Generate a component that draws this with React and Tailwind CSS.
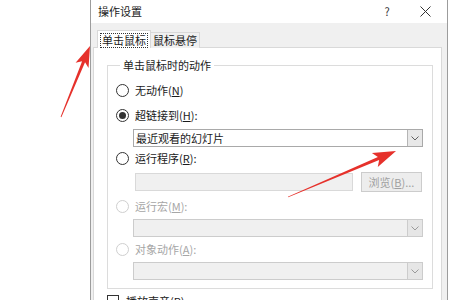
import React from "react";

const font = { fontFamily: '"Noto Sans CJK SC", "Noto Sans", sans-serif' };

// red annotation arrow, points computed from tail -> tip
function Arrow({ tail, tip, head = 20, wing = 7, shaft = 1.6 }) {
    const dx = tip[0] - tail[0];
    const dy = tip[1] - tail[1];
    const len = Math.hypot(dx, dy);
    const ux = dx / len;
    const uy = dy / len;
    const nx = -uy;
    const ny = ux;
    const bx = tip[0] - ux * head;
    const by = tip[1] - uy * head;
    const pts = [
        [tail[0] + nx * 0.4, tail[1] + ny * 0.4],
        [bx + ux * 4 + nx * shaft, by + uy * 4 + ny * shaft],
        [bx + nx * wing, by + ny * wing],
        tip,
        [bx - nx * wing, by - ny * wing],
        [bx + ux * 4 - nx * shaft, by + uy * 4 - ny * shaft],
        [tail[0] - nx * 0.4, tail[1] - ny * 0.4],
    ];
    return <polygon points={pts.map((p) => p.join(",")).join(" ")} fill="#e6312b" />;
}

function Radio({ checked, disabled, children }) {
    return (
        <div className="flex items-center h-[18px]">
            <span
                className={`w-[13px] h-[13px] rounded-full border bg-white flex items-center justify-center ${disabled ? "border-[#cfcfcf]" : "border-[#333333]"
                    }`}
            >
                {checked && <span className="w-[7px] h-[7px] rounded-full bg-[#333333]" />}
            </span>
            <span className={`ml-[6px] ${disabled ? "text-[#a6a6a6]" : "text-[#1a1a1a]"}`}>
                {children}
            </span>
        </div>
    );
}

function Chevron({ color }) {
    return (
        <svg width="8" height="5" viewBox="0 0 8 5">
            <path d="M0.5 0.5 L4 4 L7.5 0.5" fill="none" stroke={color} strokeWidth="1" />
        </svg>
    );
}

function Select({ value, disabled }) {
    return (
        <div
            className={`ml-[17px] h-[18px] flex border ${disabled ? "border-[#cccccc] bg-[#f0f0f0]" : "border-[#a9a9a9] bg-white"
                }`}
        >
            <span className="flex-1 px-[2px] leading-[16px] text-[#1a1a1a]">{value}</span>
            <span
                className={`w-[15px] border-l flex items-center justify-center ${disabled ? "border-[#cccccc] bg-[#e6e6e6]" : "border-[#b5b5b5] bg-[#e8e8e8]"
                    }`}
            >
                <Chevron color={disabled ? "#9a9a9a" : "#606060"} />
            </span>
        </div>
    );
}

export default function App() {
    return (
        <div className="w-[450px] h-[300px] bg-white relative overflow-hidden flex text-[11px]" style={font}>
            <div className="ml-[90px] w-[358px] h-full border-l border-r border-[#9c9c9c] flex flex-col bg-[#f0f0f0]">
                {/* Title bar */}
                <div className="h-[23px] bg-white flex items-center shrink-0">
                    <span className="pl-[7px] flex-1 text-[#1a1a1a]">操作设置</span>
                    <span className="w-[14px] text-center text-[#333333] mr-[26px]">?</span>
                    <svg width="11" height="11" viewBox="0 0 11 11" className="mr-[16px]">
                        <path d="M0.5 0.5 L10.5 10.5 M10.5 0.5 L0.5 10.5" stroke="#333333" strokeWidth="1" />
                    </svg>
                </div>

                {/* Tabs */}
                <div className="flex items-end mt-[7px] ml-[6px] h-[18px] shrink-0 relative z-10">
                    <div className="h-[18px] px-[2px] pt-[1px] bg-white border border-b-0 border-[#d9d9d9]">
                        <span className="px-[1px] border border-dotted border-[#333333] leading-[13px] inline-block text-[#1a1a1a]">
                            单击鼠标
                        </span>
                    </div>
                    <div className="h-[16px] px-[2px] flex items-center border border-l-0 border-b-0 border-[#d9d9d9] bg-[#f0f0f0] text-[#1a1a1a]">
                        鼠标悬停
                    </div>
                </div>

                {/* Panel */}
                <div className="ml-[2px] mr-[5px] -mt-px flex-1 bg-white border border-[#d9d9d9] pt-[9px] pl-[13px] pr-[8px]">
                    <fieldset className="border border-[#dcdcdc] pl-[8px] pr-[9px] pb-[8px]">
                        <legend className="ml-[4px] px-[3px] leading-[16px] text-[#1a1a1a]">单击鼠标时的动作</legend>
                        <div className="pt-[8px] flex flex-col">
                            <Radio>
                                无动作(<u>N</u>)
                            </Radio>
                            <div className="mt-[7px]">
                                <Radio checked>
                                    超链接到(<u>H</u>):
                                </Radio>
                            </div>
                            <div className="mt-[5px]">
                                <Select value="最近观看的幻灯片" />
                            </div>
                            <div className="mt-[2px]">
                                <Radio>
                                    运行程序(<u>R</u>):
                                </Radio>
                            </div>
                            <div className="mt-[5px] flex items-center h-[20px]">
                                <div className="ml-[19px] flex-1 h-[18px] bg-[#f0f0f0] border border-[#d9d9d9]" />
                                <div className="ml-[8px] mr-[1px] w-[61px] h-[20px] bg-[#ededed] border border-[#cccccc] flex items-center justify-center text-[#a0a0a0]">
                                    浏览(<u>B</u>)...
                                </div>
                            </div>
                            <div className="mt-[5px]">
                                <Radio disabled>
                                    运行宏(<u>M</u>):
                                </Radio>
                            </div>
                            <div className="mt-[4px]">
                                <Select disabled value="" />
                            </div>
                            <div className="mt-[3px]">
                                <Radio disabled>
                                    对象动作(<u>A</u>):
                                </Radio>
                            </div>
                            <div className="mt-[4px]">
                                <Select disabled value="" />
                            </div>
                        </div>
                    </fieldset>
                    <div className="mt-[5px] flex items-center h-[14px]">
                        <span className="w-[12px] h-[12px] border border-[#333333] bg-white" />
                        <span className="ml-[7px] text-[#1a1a1a]">
                            播放声音(<u>P</u>):
                        </span>
                    </div>
                </div>
            </div>

            {/* annotation arrows */}
            <svg className="absolute left-0 top-0 pointer-events-none" width="450" height="300">
                <Arrow tail={[61, 117]} tip={[90, 46]} head={21} wing={7} />
                <Arrow tail={[288, 197]} tip={[396, 151]} head={23} wing={7.5} />
            </svg>
        </div>
    );
}
